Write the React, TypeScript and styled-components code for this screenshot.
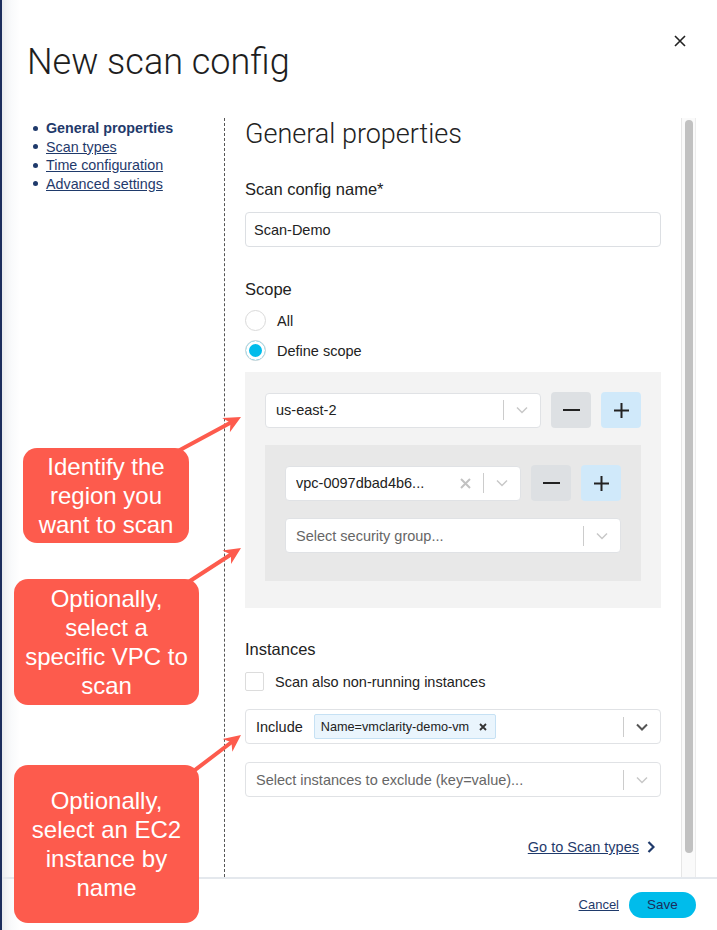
import React from "react";
import styled, { createGlobalStyle } from "styled-components";

const NAVY = "#1f3a6b";
const RED = "#fd5b4d";

const GlobalStyle = createGlobalStyle`
  html, body { margin: 0; padding: 0; background: #fff; }
  body { font-family: "Liberation Sans", Arial, sans-serif; color: #222; }
  * { box-sizing: border-box; }
`;

const Page = styled.div`
  position: relative;
  width: 717px;
  height: 930px;
  overflow: hidden;
  display: flex;
  flex-direction: column;
  padding-left: 2px;
  box-shadow: inset 2px 0 0 #1b2d5c;
  background: linear-gradient(to right, #e2e5e9 0px, #eff1f3 5px, #f9fafb 11px, #ffffff 20px);
`;

const Header = styled.header`
  height: 118px;
  flex: none;
  display: flex;
  justify-content: space-between;
  align-items: flex-start;
  padding: 0 31px 0 25px;
`;

const Title = styled.h1`
  margin: 42px 0 0;
  font-family: Roboto, sans-serif;
  font-weight: 300;
  font-size: 36px;
  line-height: 40px;
  color: #1e1e1e;
`;

const CloseButton = styled.button`
  margin-top: 35px;
  width: 12px;
  height: 12px;
  padding: 0;
  border: 0;
  background: none;
  display: flex;
  cursor: pointer;
`;

const Main = styled.div`
  flex: 1;
  min-height: 0;
  display: flex;
`;

const Nav = styled.nav`
  width: 223px;
  flex: none;
  border-right: 1px dashed #555;
  padding: 1px 0 0 31px;
  display: flex;
  flex-direction: column;
`;

const NavItem = styled.a<{ $active?: boolean }>`
  display: flex;
  align-items: center;
  gap: 8px;
  font-size: 14.3px;
  line-height: 18.5px;
  color: ${NAVY};
  font-weight: ${(p) => (p.$active ? 700 : 400)};
  text-decoration: ${(p) => (p.$active ? "none" : "underline")};
  cursor: pointer;
  &::before {
    content: "";
    flex: none;
    width: 5px;
    height: 5px;
    border-radius: 50%;
    background: ${NAVY};
  }
`;

const Content = styled.div`
  width: 456px;
  flex: none;
  padding: 0 20px;
  display: flex;
  flex-direction: column;
  overflow: hidden;
`;

const ScrollTrack = styled.div`
  width: 15px;
  flex: none;
  background: #fafafa;
  border-left: 1px solid #e6e6e6;
  border-right: 1px solid #ececec;
  padding: 2px 2px 24px 3px;
  display: flex;
  flex-direction: column;
`;

const ScrollThumb = styled.div`
  flex: 1;
  width: 8px;
  border-radius: 4px;
  background: #c1c1c1;
`;

const SectionTitle = styled.h2`
  margin: 0;
  font-family: Roboto, sans-serif;
  font-weight: 300;
  font-size: 27px;
  line-height: 32px;
  color: #222;
`;

const FieldLabel = styled.div<{ $mt: number }>`
  margin-top: ${(p) => p.$mt}px;
  font-size: 16.5px;
  line-height: 20px;
  color: #222;
`;

const TextInput = styled.div`
  margin-top: 13px;
  height: 35px;
  flex: none;
  border: 1px solid #dcdfe3;
  border-radius: 4px;
  background: #fff;
  display: flex;
  align-items: center;
  padding-left: 8px;
  font-size: 14.5px;
  color: #222;
`;

const RadioGroup = styled.div`
  margin-top: 11px;
  display: flex;
  flex-direction: column;
  gap: 9px;
`;

const RadioRow = styled.label`
  display: flex;
  align-items: center;
  gap: 11px;
  font-size: 14.5px;
  color: #222;
  height: 21px;
`;

const RadioCircle = styled.span<{ $checked?: boolean }>`
  width: 21px;
  height: 21px;
  flex: none;
  border-radius: 50%;
  border: 1px solid #dadada;
  background: ${(p) => (p.$checked ? "#00bceb" : "#fff")};
  box-shadow: inset 0 0 0 3px #fff;
`;

const ScopeBox = styled.div`
  margin-top: 11px;
  flex: none;
  background: #f3f3f3;
  padding: 20px 20px 27px;
  display: flex;
  flex-direction: column;
`;

const InnerScopeBox = styled.div`
  margin-top: 17px;
  flex: none;
  background: #e8e8e8;
  padding: 20px 20px 28px;
  display: flex;
  flex-direction: column;
`;

const SelectBox = styled.div<{ $mt?: number }>`
  flex: none;
  min-width: 0;
  height: 35px;
  margin-top: ${(p) => p.$mt ?? 0}px;
  background: #fff;
  border: 1px solid #e0e2e5;
  border-radius: 4px;
  display: flex;
  align-items: center;
  padding-left: 10px;
`;

const PickerRow = styled.div`
  display: flex;
  align-items: center;
  gap: 10px;
  & > ${SelectBox} {
    flex: 1;
  }
`;

const SelectValue = styled.span<{ $placeholder?: boolean }>`
  flex: 1;
  min-width: 0;
  font-size: 14.5px;
  color: ${(p) => (p.$placeholder ? "#666" : "#222")};
  white-space: nowrap;
  overflow: hidden;
`;

const InlineLabel = styled.span`
  font-size: 14.5px;
  color: #222;
  margin-right: 11px;
`;

const Chip = styled.span`
  height: 25px;
  display: flex;
  align-items: center;
  gap: 10px;
  padding: 0 8px 0 6px;
  background: #eaf5fd;
  border: 1px solid #c6e1f4;
  border-radius: 2px;
  font-size: 12.7px;
  color: #222;
`;

const ChipSpacer = styled.span`
  flex: 1;
`;

const IndicatorSep = styled.span`
  width: 1px;
  height: 20px;
  flex: none;
  background: #cccccc;
`;

const IndicatorButton = styled.span`
  width: 36px;
  height: 100%;
  flex: none;
  display: flex;
  align-items: center;
  justify-content: center;
`;

const SquareButton = styled.button<{ $variant: "minus" | "plus" }>`
  width: 40px;
  height: 36px;
  flex: none;
  border: 0;
  border-radius: 4px;
  padding: 0;
  background: ${(p) => (p.$variant === "plus" ? "#d0e9fa" : "#dde0e3")};
  display: flex;
  align-items: center;
  justify-content: center;
  cursor: pointer;
`;

const CheckRow = styled.label`
  margin-top: 13px;
  display: flex;
  align-items: center;
  gap: 11px;
  font-size: 14.5px;
  color: #222;
`;

const CheckBox = styled.span`
  width: 19px;
  height: 19px;
  flex: none;
  border: 1px solid #dcdcdc;
  border-radius: 2px;
  background: #fff;
`;

const NextLinkRow = styled.div`
  margin-top: 40px;
  margin-right: 6px;
  height: 20px;
  flex: none;
  display: flex;
  justify-content: flex-end;
  align-items: center;
  gap: 8px;
`;

const TextLink = styled.a<{ $size: number }>`
  font-size: ${(p) => p.$size}px;
  color: ${NAVY};
  text-decoration: underline;
  cursor: pointer;
`;

const Footer = styled.footer`
  height: 53px;
  flex: none;
  border-top: 2px solid #e4e8ed;
  display: flex;
  justify-content: flex-end;
  align-items: center;
  gap: 10px;
  padding-right: 21px;
`;

const SaveButton = styled.button`
  width: 67px;
  height: 26px;
  border: 0;
  border-radius: 13px;
  background: #00bceb;
  color: #1b2d5c;
  font-family: "Liberation Sans", Arial, sans-serif;
  font-size: 13.5px;
  cursor: pointer;
`;

const Overlay = styled.svg`
  position: absolute;
  left: 0;
  top: 0;
  pointer-events: none;
`;

const Callout = styled.div<{ $left: number; $top: number; $w: number; $h: number }>`
  position: absolute;
  left: ${(p) => p.$left}px;
  top: ${(p) => p.$top}px;
  width: ${(p) => p.$w}px;
  height: ${(p) => p.$h}px;
  background: ${RED};
  border-radius: 14px;
  color: #fff;
  font-size: 24px;
  line-height: 29px;
  text-align: center;
  display: flex;
  align-items: center;
  justify-content: center;
`;

const Chevron = ({ dark }: { dark?: boolean }) => (
  <svg width="12" height="8" viewBox="0 0 12 8">
    <polyline
      points="1,1.5 6,6.5 11,1.5"
      fill="none"
      stroke={dark ? "#555" : "#c8c8c8"}
      strokeWidth={dark ? 2 : 1.5}
    />
  </svg>
);

const ClearX = () => (
  <svg width="11" height="11" viewBox="0 0 11 11">
    <path d="M1 1 L10 10 M10 1 L1 10" stroke="#c2c2c2" strokeWidth="2" />
  </svg>
);

const ChipX = () => (
  <svg width="8" height="8" viewBox="0 0 8 8">
    <path d="M1 1 L7 7 M7 1 L1 7" stroke="#333" strokeWidth="1.8" />
  </svg>
);

const MinusIcon = () => (
  <svg width="17" height="2" viewBox="0 0 17 2">
    <rect x="0" y="0" width="17" height="2" fill="#222" />
  </svg>
);

const PlusIcon = () => (
  <svg width="15" height="15" viewBox="0 0 15 15">
    <rect x="0" y="6.5" width="15" height="2" fill="#222" />
    <rect x="6.5" y="0" width="2" height="15" fill="#222" />
  </svg>
);

const CloseIcon = () => (
  <svg width="12" height="12" viewBox="0 0 12 12">
    <path d="M1 1 L11 11 M11 1 L1 11" stroke="#222" strokeWidth="1.6" />
  </svg>
);

const LinkChevron = () => (
  <svg width="8" height="12" viewBox="0 0 8 12">
    <polyline points="1.5,1 6.5,6 1.5,11" fill="none" stroke={NAVY} strokeWidth="2.2" />
  </svg>
);

type Pt = [number, number];

function Arrow({ tip, dir, length }: { tip: Pt; dir: Pt; length: number }) {
  const n = Math.hypot(dir[0], dir[1]);
  const ux = dir[0] / n;
  const uy = dir[1] / n;
  const px = -uy;
  const py = ux;
  const L = 17;
  const W = 8;
  const sx = tip[0] - ux * length;
  const sy = tip[1] - uy * length;
  const bx = tip[0] - ux * L;
  const by = tip[1] - uy * L;
  const nx = tip[0] - ux * (L - 5);
  const ny = tip[1] - uy * (L - 5);
  const pts = [
    [tip[0], tip[1]],
    [bx + px * W, by + py * W],
    [nx, ny],
    [bx - px * W, by - py * W],
  ]
    .map((p) => p.join(","))
    .join(" ");
  return (
    <g>
      <line x1={sx} y1={sy} x2={nx} y2={ny} stroke={RED} strokeWidth={4} strokeLinecap="round" />
      <polygon points={pts} fill={RED} />
    </g>
  );
}

const Select = ({
  value,
  placeholder,
  clearable,
  mt,
}: {
  value?: string;
  placeholder?: string;
  clearable?: boolean;
  mt?: number;
}) => (
  <SelectBox $mt={mt}>
    <SelectValue $placeholder={!value}>{value ?? placeholder}</SelectValue>
    {clearable && (
      <IndicatorButton>
        <ClearX />
      </IndicatorButton>
    )}
    <IndicatorSep />
    <IndicatorButton>
      <Chevron />
    </IndicatorButton>
  </SelectBox>
);

export default function App() {
  return (
    <>
      <GlobalStyle />
      <Page>
        <Header>
          <Title>New scan config</Title>
          <CloseButton aria-label="Close">
            <CloseIcon />
          </CloseButton>
        </Header>
        <Main>
          <Nav>
            <NavItem $active>General properties</NavItem>
            <NavItem>Scan types</NavItem>
            <NavItem>Time configuration</NavItem>
            <NavItem>Advanced settings</NavItem>
          </Nav>
          <Content>
            <SectionTitle>General properties</SectionTitle>
            <FieldLabel $mt={29}>Scan config name*</FieldLabel>
            <TextInput>Scan-Demo</TextInput>

            <FieldLabel $mt={32}>Scope</FieldLabel>
            <RadioGroup>
              <RadioRow>
                <RadioCircle />
                All
              </RadioRow>
              <RadioRow>
                <RadioCircle $checked />
                Define scope
              </RadioRow>
            </RadioGroup>
            <ScopeBox>
              <PickerRow>
                <Select value="us-east-2" />
                <SquareButton $variant="minus">
                  <MinusIcon />
                </SquareButton>
                <SquareButton $variant="plus">
                  <PlusIcon />
                </SquareButton>
              </PickerRow>
              <InnerScopeBox>
                <PickerRow>
                  <Select value="vpc-0097dbad4b6..." clearable />
                  <SquareButton $variant="minus">
                    <MinusIcon />
                  </SquareButton>
                  <SquareButton $variant="plus">
                    <PlusIcon />
                  </SquareButton>
                </PickerRow>
                <Select placeholder="Select security group..." mt={17} />
              </InnerScopeBox>
            </ScopeBox>

            <FieldLabel $mt={31}>Instances</FieldLabel>
            <CheckRow>
              <CheckBox />
              Scan also non-running instances
            </CheckRow>
            <SelectBox $mt={18}>
              <InlineLabel>Include</InlineLabel>
              <Chip>
                Name=vmclarity-demo-vm
                <ChipX />
              </Chip>
              <ChipSpacer />
              <IndicatorSep />
              <IndicatorButton>
                <Chevron dark />
              </IndicatorButton>
            </SelectBox>
            <Select placeholder="Select instances to exclude (key=value)..." mt={18} />

            <NextLinkRow>
              <TextLink $size={14.5}>Go to Scan types</TextLink>
              <LinkChevron />
            </NextLinkRow>
          </Content>
          <ScrollTrack>
            <ScrollThumb />
          </ScrollTrack>
        </Main>
        <Footer>
          <TextLink $size={13}>Cancel</TextLink>
          <SaveButton>Save</SaveButton>
        </Footer>

        <Overlay width={717} height={930}>
          <Arrow tip={[241, 417]} dir={[61, -33]} length={80} />
          <Arrow tip={[241, 548]} dir={[51, -33]} length={75} />
          <Arrow tip={[241, 735]} dir={[46, -35]} length={75} />
        </Overlay>
        <Callout $left={23} $top={448} $w={166} $h={95}>
          Identify the
          <br />
          region you
          <br />
          want to scan
        </Callout>
        <Callout $left={14} $top={579} $w={185} $h={126}>
          Optionally,
          <br />
          select a
          <br />
          specific VPC to
          <br />
          scan
        </Callout>
        <Callout $left={14} $top={765} $w={185} $h={158}>
          Optionally,
          <br />
          select an EC2
          <br />
          instance by
          <br />
          name
        </Callout>
      </Page>
    </>
  );
}
